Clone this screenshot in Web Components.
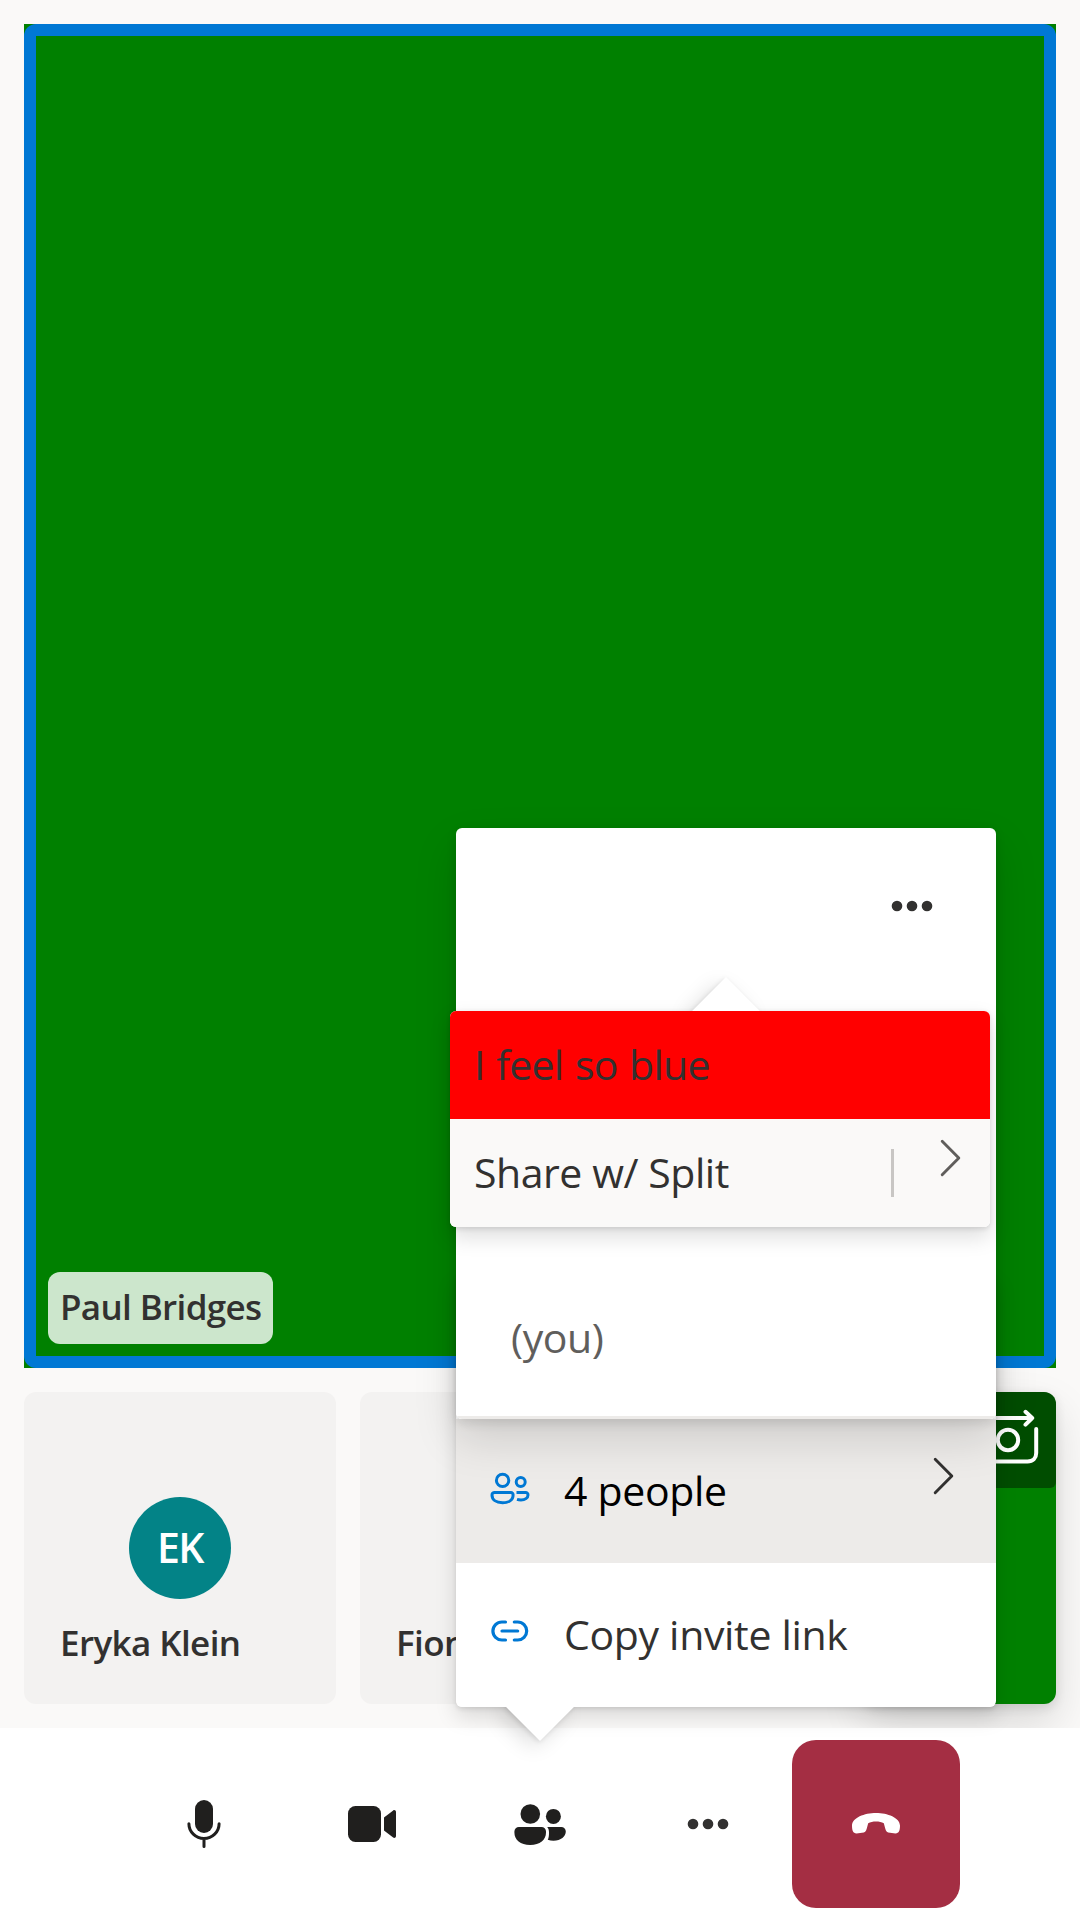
<!DOCTYPE html>
<html lang="en">
<head>
<meta charset="utf-8">
<title>Call</title>
<style>
html,body{margin:0;padding:0;width:1080px;height:1920px;overflow:hidden;background:#faf9f8}
body{font-family:"Open Sans","Noto Sans",sans-serif;color:#323130}
</style>
</head>
<body>
<call-screen></call-screen>
<script>
const define = (name, html) => {
  const tpl = document.createElement('template');
  tpl.innerHTML = html;
  customElements.define(name, class extends HTMLElement {
    constructor() {
      super();
      this.attachShadow({ mode: 'open' }).append(tpl.content.cloneNode(true));
    }
  });
};

const ICONS = {
  mic: [60, '<rect x="21" y="6" width="18" height="33" rx="9" fill="currentColor"/><path d="M14.9 29.7a15.1 14.7 0 0 0 30.2 0M30 45v7.5" fill="none" stroke="currentColor" stroke-width="3" stroke-linecap="round"/>'],
  video: [60, '<g fill="currentColor"><rect x="6" y="12" width="33" height="36" rx="7.5"/><path d="M42 23.6L51.2 16.4C52.4 15.5 54 16.4 54 18V42C54 43.6 52.4 44.5 51.2 43.6L42 36.4z"/></g>'],
  people: [60, '<g fill="currentColor"><circle cx="20.3" cy="20" r="9.8"/><circle cx="43.4" cy="22.4" r="7.5"/><path d="M9 33H31.5A4.5 4.5 0 0 1 36 37.5V38.5C36 46 30 51 20.2 51S4.4 46 4.4 38.5V37.5A4.5 4.5 0 0 1 9 33z"/><path d="M37.2 33H51.2A4.5 4.5 0 0 1 55.8 37.5C55.8 42.5 51 46.7 43.5 46.7C41.4 46.7 39.6 46.4 37.8 45.8C38.8 43.6 39 41.8 39 38.5C39 36.3 38.6 34.6 37.2 33z"/></g>'],
  more: [60, '<g fill="currentColor"><circle cx="15" cy="30" r="5.3"/><circle cx="30" cy="30" r="5.3"/><circle cx="45" cy="30" r="5.3"/></g>'],
  hangup: [60, '<path fill="currentColor" d="M30 18.9C41.5 18.9 54 23.6 54 31.5C54 36.5 53 39.4 49.5 39.4L44 38.8C41.2 38.5 40 37.5 39.3 34.8L37.8 29.2C35.8 28.2 33 27.5 30 27.5S24.2 28.2 22.2 29.2L20.7 34.8C20 37.5 18.8 38.5 16 38.8L10.5 39.4C7 39.4 6 36.5 6 31.5C6 23.6 18.5 18.9 30 18.9z"/>'],
  group: [48, '<g fill="none" stroke="currentColor" stroke-width="3" stroke-linejoin="round"><circle cx="16.6" cy="16.4" r="6.2"/><circle cx="34.7" cy="18" r="4.5"/><path d="M8.6 28.4H24.8A2.4 2.4 0 0 1 27.1 31C27.1 35.8 23.2 38.7 16.6 38.7S6 35.8 6 31A2.6 2.6 0 0 1 8.6 28.4z"/><path d="M30.5 28.4H39.6A2.4 2.4 0 0 1 42 31C42 34 39 35.9 35 35.9C33.6 35.9 32.3 35.8 31 35.4"/></g>'],
  link: [48, '<path d="M19.5 15H15.9a9 9 0 0 0 0 18H19.5M28.3 15H31.7a9 9 0 0 1 0 18H28.3M16 24H31.7" fill="none" stroke="currentColor" stroke-width="3.2" stroke-linecap="round"/>'],
  chevron: [48, '<path d="M15.2 7.3L31.8 24L15.2 40.7" fill="none" stroke="currentColor" stroke-width="2.9" stroke-linecap="round" stroke-linejoin="round"/>'],
  flip: [96, '<g fill="none" stroke="currentColor" stroke-width="4" stroke-linecap="round" stroke-linejoin="round"><circle cx="48" cy="48" r="10.2"/><path d="M26 26H72M65.5 19.8L72.2 26L65.5 32.7M76.2 37V61C76.2 66 73 69.5 67.5 69.5H28C22.5 69.5 20 66 20 61V37"/></g>']
};
customElements.define('call-icon', class extends HTMLElement {
  constructor() {
    super();
    this.attachShadow({ mode: 'open' });
  }
  connectedCallback() {
    const [s, body] = ICONS[this.getAttribute('name')];
    this.shadowRoot.innerHTML = `<style>:host{display:block;flex:none;width:${s}px;height:${s}px}svg{display:block}</style><svg width="${s}" height="${s}" viewBox="0 0 ${s} ${s}">${body}</svg>`;
  }
});

define('speaker-tile', `<style>
:host{display:flex;height:1344px;background:#008000}
.frame{box-sizing:border-box;flex:1;position:relative;display:flex;align-items:flex-end;padding:24px;isolation:isolate}
.ring{position:absolute;inset:0;border-radius:12px;overflow:hidden;z-index:-1}
.ring i{display:block;box-sizing:border-box;width:100%;height:100%;border:12px solid #0078d4}
.name{box-sizing:border-box;width:225px;height:72px;border-radius:12px;background:rgba(255,255,255,.8);padding-left:12px;font:600 35px/70px "Open Sans";white-space:nowrap;letter-spacing:-.65px}
</style><div class="frame"><div class="ring"><i></i></div><div class="name"><slot></slot></div></div>`);

define('person-tile', `<style>
:host{position:relative;display:flex;flex-direction:column;align-items:center;box-sizing:border-box;width:312px;height:312px;border-radius:12px;background:#f3f2f1;padding-top:105px}
.avatar{width:102px;height:102px;border-radius:50%;background:#038387;color:#fff;font:600 41px/101px "Open Sans";text-align:center;letter-spacing:-1.5px}
.name{align-self:stretch;padding-left:36px;margin-top:8px;font:600 35px/72px "Open Sans";white-space:nowrap;letter-spacing:-.6px}
</style><div class="avatar"><slot name="initials"></slot></div><div class="name"><slot></slot></div>`);

define('local-tile', `<style>
:host{display:flex;justify-content:flex-end;align-items:flex-start;width:192px;height:312px;border-radius:12px;overflow:hidden;background:#008000;color:#fff;box-shadow:0 19.2px 43.2px rgba(0,0,0,.133),0 3.6px 10.8px rgba(0,0,0,.11)}
div{background:rgba(0,0,0,.4);border-radius:6px}
</style><div><call-icon name="flip"></call-icon></div>`);

define('call-gallery', `<style>
:host{display:flex;flex-direction:column;gap:24px;padding:24px;height:1680px}
.strip{display:flex;gap:24px}
.local{margin-left:auto}
</style>
<speaker-tile>Paul Bridges</speaker-tile>
<div class="strip">
<person-tile><span slot="initials">EK</span>Eryka Klein</person-tile>
<person-tile><span slot="initials"></span>Fiona</person-tile>
<local-tile class="local"></local-tile></div>`);

define('bar-button', `<style>
:host{display:flex;align-items:center;justify-content:center;width:168px;height:168px;border-radius:24px}
</style><slot></slot>`);

define('control-bar', `<style>
:host{position:relative;display:flex;align-items:center;justify-content:center;height:192px;background:#fff;color:#201f1e}
.more{color:#323130}.end{background:#a42e43;color:#fff}
</style>
<bar-button><call-icon name="mic"></call-icon></bar-button>
<bar-button><call-icon name="video"></call-icon></bar-button>
<bar-button><call-icon name="people"></call-icon></bar-button>
<bar-button class="more"><call-icon name="more"></call-icon></bar-button>
<bar-button class="end"><call-icon name="hangup"></call-icon></bar-button>`);

define('call-out', `<style>
:host{position:absolute;display:block;width:540px;border-radius:6px;--shadow:0 9.6px 21.6px rgba(0,0,0,.133),0 1.8px 5.4px rgba(0,0,0,.11);box-shadow:var(--shadow)}
:host([deep]){--shadow:0 19.2px 43.2px rgba(0,0,0,.133),0 3.6px 10.8px rgba(0,0,0,.11)}
.beak{display:none;position:absolute;width:48px;height:48px;background:#fff;transform:rotate(45deg);box-shadow:var(--shadow)}
:host([beak]) .beak{display:block}
:host([beak=bottom]) .beak{left:60px;bottom:-24px}
:host([beak=top]) .beak{left:252px;top:-24px}
.body{position:relative;display:flex;flex-direction:column;background:#fff;border-radius:6px;overflow:hidden}
</style><div class="beak"></div><div class="body"><slot></slot></div>`);

define('menu-row', `<style>
:host{display:flex;align-items:center;box-sizing:border-box;height:144px;padding:0 28px 0 30px;font-size:41px;white-space:nowrap;letter-spacing:-.33px}
::slotted([slot=icon]){color:#0078d4;margin:0 30px 7px 0}
.label{flex:1;padding-bottom:2px}
::slotted([slot=end]){margin-bottom:31px}
</style><slot name="icon"></slot><span class="label"><slot></slot></span><slot name="end"></slot>`);

define('call-screen', `<style>
:host{position:relative;display:flex;flex-direction:column;width:1080px;height:1920px;overflow:hidden;background:#faf9f8}
.people{left:456px;top:1275px}
.list{left:456px;top:828px}
.options{left:450px;top:1011px}
.hover{background:#edebe9;color:#000}
.spacer{height:144px}
.first{display:flex;justify-content:flex-end;height:252px;padding:48px 54px 0 0}
.you{height:288px;padding-left:55px;font-size:41px;line-height:56px;color:#605e5c;letter-spacing:-.4px}
.you span{display:block;padding-top:181px}
.line{height:3px;background:#edebe9}
.opt{height:108px;padding:0 15px 0 24px}
.red{background:red;letter-spacing:-.75px;word-spacing:1.6px}
.split{background:#faf9f8;letter-spacing:-.45px}
.end{display:flex;align-items:center;gap:33px;color:#605e5c}
.end i{width:3px;height:48px;background:#c8c6c4}
.end call-icon{margin-bottom:30px}
.opt .end{margin:0}
.dark{color:#323130}
.link{margin-bottom:9px}
</style>
<call-gallery></call-gallery>
<control-bar></control-bar>
<call-out class="people" beak="bottom">
  <div class="spacer"></div>
  <menu-row class="hover"><call-icon slot="icon" name="group"></call-icon>4 people<call-icon class="dark" slot="end" name="chevron"></call-icon></menu-row>
  <menu-row><call-icon class="link" slot="icon" name="link"></call-icon>Copy invite link</menu-row>
</call-out>
<call-out class="list" deep>
  <div class="first"><call-icon name="more"></call-icon></div>
  <div class="you"><span>(you)</span></div>
  <div class="line"></div>
</call-out>
<call-out class="options" beak="top">
  <menu-row class="opt red">I feel so blue</menu-row>
  <menu-row class="opt split">Share w/ Split<div class="end" slot="end"><i></i><call-icon name="chevron"></call-icon></div></menu-row>
</call-out>`);
</script>
</body>
</html>
